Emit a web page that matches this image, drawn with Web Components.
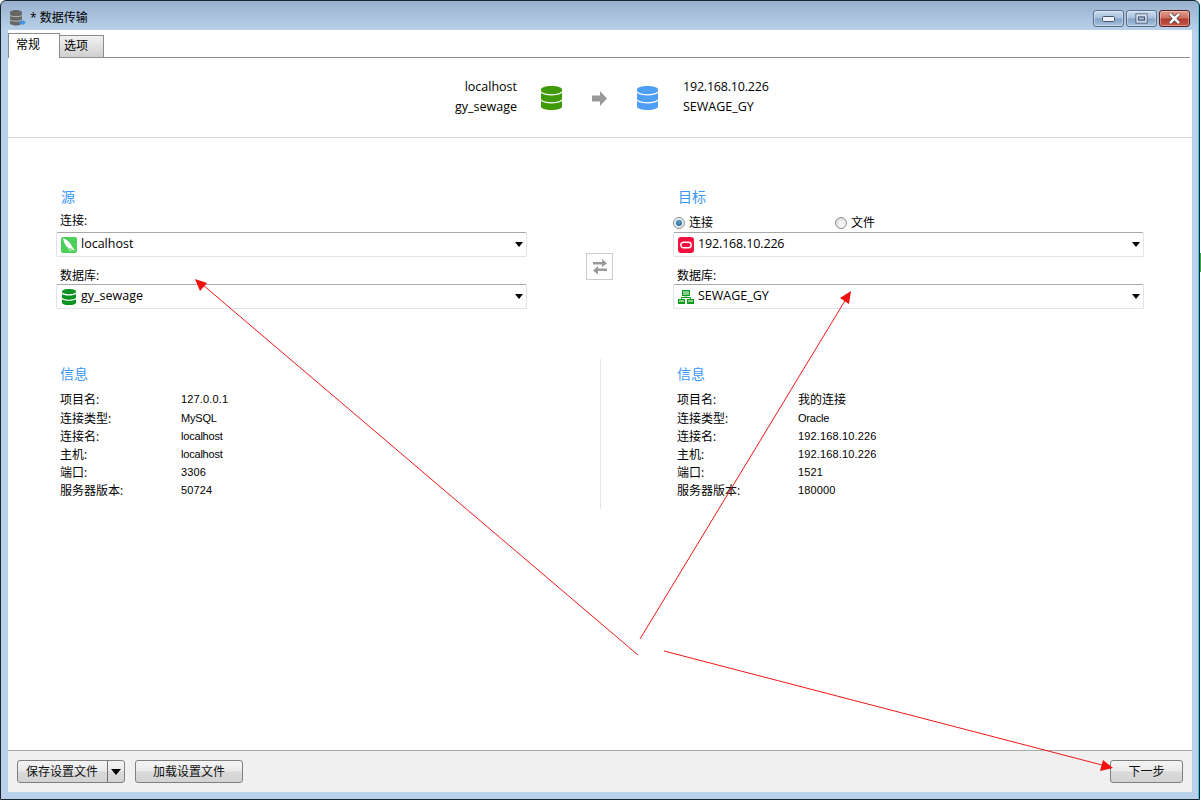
<!DOCTYPE html>
<html lang="zh">
<head>
<meta charset="utf-8">
<title>数据传输</title>
<style>
html, body { margin: 0; overflow: hidden; }
html { background: #fff linear-gradient(transparent 253px, #3fa535 253px, #3fa535 272px, transparent 272px) right top / 1px 100% no-repeat; }
body { font: 12px/18px "Open Sans", "Noto Sans CJK SC", sans-serif; color: #000; }
</style>
</head>
<body>
<transfer-window caption="* 数据传输">
    <tab-strip slot="tabs"></tab-strip>
    <transfer-summary></transfer-summary>
    <transfer-form>
        <conn-panel slot="source" heading="源">
            <field-label first>连接:</field-label>
            <select-box icon="mysql">localhost</select-box>
            <field-label>数据库:</field-label>
            <select-box icon="db">gy_sewage</select-box>
        </conn-panel>
        <swap-button slot="swap"></swap-button>
        <conn-panel slot="target" heading="目标">
            <radio-row></radio-row>
            <select-box icon="oracle" style="letter-spacing: -.15px">192.168.10.226</select-box>
            <field-label>数据库:</field-label>
            <select-box icon="schema">SEWAGE_GY</select-box>
        </conn-panel>
        <info-panel slot="source-info">
            <info-row label="项目名:" value="127.0.0.1" first></info-row>
            <info-row label="连接类型:" value="MySQL"></info-row>
            <info-row label="连接名:" value="localhost"></info-row>
            <info-row label="主机:" value="localhost"></info-row>
            <info-row label="端口:" value="3306"></info-row>
            <info-row label="服务器版本:" value="50724"></info-row>
        </info-panel>
        <info-panel slot="target-info">
            <info-row label="项目名:" value="我的连接" first cjk></info-row>
            <info-row label="连接类型:" value="Oracle"></info-row>
            <info-row label="连接名:" value="192.168.10.226"></info-row>
            <info-row label="主机:" value="192.168.10.226"></info-row>
            <info-row label="端口:" value="1521"></info-row>
            <info-row label="服务器版本:" value="180000"></info-row>
        </info-panel>
    </transfer-form>
    <footer-bar slot="footer"></footer-bar>
</transfer-window>
<red-arrows></red-arrows>

<script>
const dbPath = 'M0 3.5C0 1.4 4.7 0 10.5 0S21 1.4 21 3.5V20.5C21 22.6 16.3 24 10.5 24S0 22.6 0 20.5Z';
const dbLines = 'M0 6C2 8 6 8.8 10.5 8.8S19 8 21 6M0 14C2 16 6 16.8 10.5 16.8S19 16 21 14';

const icons = {
    mysql: `<svg width="16" height="16" viewBox="0 0 16 16"><rect width="16" height="16" rx="2" fill="#4dd05a"/><path d="M1.500 1.500c2.200.2 3.900 1 5.500 2.500 1.800 1.700 3.300 3.700 4.300 5.800.5 1 1.300 2.100 3 3.900-2.200-.5-3.600-1.200-5-2.500-.7.200-1.400 0-2.100-.5C5 9 3.800 7.400 3.300 5.500 3 4.300 2.400 3 1.500 1.500Z" fill="#fff"/><path d="M7 11.500c.8.900 2 1.600 3.400 2.100" stroke="#fff" fill="none"/></svg>`,
    db: `<svg width="16" height="16" viewBox="0 0 21 24"><path d="${dbPath}" fill="#0d9222"/><path d="${dbLines}" stroke="#fff" stroke-width="1.700" fill="none"/></svg>`,
    oracle: `<svg width="16" height="16" viewBox="0 0 16 16"><rect width="16" height="16" rx="3" fill="#f3123f"/><rect x="2.800" y="5.300" width="10.400" height="5.400" rx="2.700" fill="none" stroke="#fff" stroke-width="1.400"/></svg>`,
    schema: `<svg width="16" height="16" viewBox="0 0 16 16"><path d="M4 1h8v6H4ZM0 10h7v5H0ZM9 10h7v5H9Z" fill="#0b9c1a"/><path d="M5 3h6M5 5h6M1 12h5M10 12h5" stroke="#fff"/><path d="M8 7v2M3.500 10V8.500h9V10" stroke="#0b9c1a" fill="none"/></svg>`
};

class IconBase extends HTMLElement {
    render(css, html) {
        this.attachShadow({mode: 'open'}).innerHTML = `<style>${css}</style>${html}`;
    }
}

class TransferWindow extends IconBase {
    connectedCallback() {
        if (this.shadowRoot) return;
        this.render(`
            :host { display: flex; flex-direction: column; box-sizing: border-box; width: 1200px; height: 800px;
                border: 1px solid #17262f; border-radius: 6px 6px 0 0; padding: 0 7px 7px;
                background: linear-gradient(#9ab1ce, #b9d1ea 30px);
                box-shadow: inset -1px 0 0 #3bc3e8; }
            .bar { display: flex; align-items: flex-start; height: 29px; flex: none; }
            .logo { margin: 9px 4px 0 2px; width: 16px; height: 16px; }
            .caption { font-size: 12px; line-height: 18px; margin-top: 8px; color: #000; }
            .controls { margin: 9px 2px 0 auto; display: flex; gap: 2px; }
            .ctl { box-sizing: border-box; width: 31px; height: 17px; border: 1px solid #5b6f8a; border-radius: 3px;
                display: flex; align-items: center; justify-content: center;
                background: linear-gradient(#cbdcef 0, #a9c0dc 48%, #86a3c6 52%, #a9c3de 100%);
                box-shadow: inset 0 0 0 1px rgba(255,255,255,.35); }
            .ctl.close { border-color: #57211c; background: linear-gradient(#e19a8d 0, #cf6f60 48%, #b23a2c 52%, #c5584a 100%); }
            .content { flex: 1; display: flex; flex-direction: column; background: #fff; min-height: 0; }
            main { flex: 1; display: block; min-height: 0; }
        `, `
            <div class="bar">
                <svg class="logo" viewBox="0 0 16 16">
                    <path d="M0 2.500C0 1.100 2.700 0 6 0S12 1.100 12 2.500V13C12 14.400 9.300 15.500 6 15.500S0 14.400 0 13Z" fill="#666"/>
                    <path d="M0 5.500C2 7 10 7 12 5.500M0 10C2 11.500 10 11.500 12 10" stroke="#ccc" stroke-width=".8" fill="none"/>
                    <path d="M9 11.500h3.500V9.500L16 12.500 12.500 15.500V13.500H9Z" fill="#3d97e8"/>
                </svg>
                <span class="caption">${this.getAttribute('caption')}</span>
                <div class="controls">
                    <div class="ctl"><svg width="13" height="6"><rect x=".5" y=".5" width="12" height="5" rx="1" fill="#eef2f7" stroke="#44546a"/></svg></div>
                    <div class="ctl"><svg width="13" height="11"><rect x="1" y="1" width="11" height="9" fill="none" stroke="#44546a" stroke-width="1"/><rect x="2" y="2" width="9" height="7" fill="none" stroke="#eef2f7" stroke-width="1"/><rect x="3.500" y="4" width="6" height="3" fill="#a9c0dc" stroke="#44546a"/></svg></div>
                    <div class="ctl close"><svg width="15" height="11" viewBox="0 0 15 11"><path d="M3 1l9 9M12 1l-9 9" stroke="#3d2a2a" stroke-width="4"/><path d="M3 1l9 9M12 1l-9 9" stroke="#fff" stroke-width="2.600"/></svg></div>
                </div>
            </div>
            <div class="content">
                <slot name="tabs"></slot>
                <main><slot></slot></main>
                <slot name="footer"></slot>
            </div>
        `);
    }
}

class TabStrip extends IconBase {
    connectedCallback() {
        this.render(`
            :host { display: flex; align-items: flex-end; height: 28px; flex: none; }
            .tab { box-sizing: border-box; border: 1px solid #8c8c8c; }
            .on { width: 52px; height: 25px; border-bottom: 0; background: #fff; padding: 2px 0 0 7px; }
            .off { width: 44px; height: 23px; border-left: 0; padding: 1px 0 0 4px; background: linear-gradient(#f2f2f2, #cfcfcf); }
            .rest { flex: 1; height: 1px; background: #8c8c8c; margin-right: 2px; }
        `, `<div class="tab on">常规</div><div class="tab off">选项</div><div class="rest"></div>`);
    }
}

class TransferSummary extends IconBase {
    connectedCallback() {
        const db = c => `<svg width="21" height="24" viewBox="0 0 21 24"><path d="${dbPath}" fill="${c}"/><path d="${dbLines}" stroke="#fff" stroke-width="1.200" fill="none"/></svg>`;
        this.render(`
            :host { display: flex; align-items: flex-start; box-sizing: border-box; height: 80px; padding: 19px 0 0 389px;
                border-bottom: 1px solid #d8d8d8; font-size: 12.5px; line-height: 20px; color: #000; }
            .names { width: 120px; text-align: right; }
            .names.to { width: auto; text-align: left; margin-left: 25px; }
            .ip { letter-spacing: -.2px; }
            svg { flex: none; margin-top: 9px; }
            .first { margin-left: 24px; }
            .arrow { margin: 14px 30px 0; }
        `, `
            <div class="names">localhost<br>gy_sewage</div>
            <span class="first">${db('#3f9a08')}</span>
            <svg class="arrow" width="15" height="15" viewBox="0 0 15 15"><path d="M0 4.500H8V0L15 7.500 8 15V10.500H0Z" fill="#999"/></svg>
            <span>${db('#4f9ef5')}</span>
            <div class="names to"><span class="ip">192.168.10.226</span><br>SEWAGE_GY</div>
        `);
    }
}

class TransferForm extends IconBase {
    connectedCallback() {
        this.render(`
            :host { display: grid; grid-template-columns: 471px 146px 471px; padding: 49px 48px 0; }
            .rule { width: 1px; height: 150px; margin: 50px 0 0 73px; background: #e4e4e4; }
            .info { padding-top: 50px; }
        `, `
            <slot name="source"></slot>
            <slot name="swap"></slot>
            <slot name="target"></slot>
            <div class="info"><slot name="source-info"></slot></div>
            <div class="rule"></div>
            <div class="info"><slot name="target-info"></slot></div>
        `);
    }
}

class ConnPanel extends IconBase {
    connectedCallback() {
        this.render(`
            :host { display: grid; grid-template-rows: 20px 25px 25px 27px 25px; }
            h2 { margin: 0; padding-left: 5px; font: 14px/20px "Open Sans", "Noto Sans CJK SC", sans-serif; color: #3a97f5; }
        `, `<h2>${this.getAttribute('heading')}</h2><slot></slot>`);
    }
}

class FieldLabel extends IconBase {
    connectedCallback() {
        this.render(`
            :host { display: block; align-self: end; padding-left: 4px; line-height: 16px; }
            :host([first]) { padding-bottom: 3px; }
        `, `<slot></slot>`);
    }
}

class RadioRow extends IconBase {
    connectedCallback() {
        this.render(`
            :host { display: flex; align-items: center; align-self: end; height: 18px; font-size: 12px; }
            .item { display: flex; align-items: center; gap: 4px; }
            .item + .item { margin-left: 122px; }
            .dot { box-sizing: border-box; width: 12px; height: 12px; border-radius: 50%; border: 1px solid #8e8f8f;
                background: radial-gradient(circle at 60% 65%, #fff, #d0d0d0); display: flex; align-items: center; justify-content: center; }
            .dot.on { background: #e8eef4; }
            .dot.on::after { content: ""; width: 6px; height: 6px; border-radius: 50%; background: radial-gradient(circle at 50% 40%, #5aa8cf, #134f76); }
        `, `
            <span class="item"><span class="dot on"></span>连接</span>
            <span class="item"><span class="dot"></span>文件</span>
        `);
    }
}

class SelectBox extends IconBase {
    connectedCallback() {
        this.render(`
            :host { display: flex; align-items: center; box-sizing: border-box; height: 25px; padding: 0 2px 0 4px;
                border: 1px solid #e0e3eb; border-top-color: #a9a9a9; border-radius: 2px; background: #fff;
                font-size: 12.5px; color: #000; }
            .icon { width: 16px; height: 16px; margin-right: 4px; flex: none; }
            .icon svg { display: block; }
            .text { padding-bottom: 2px; }
            .drop { margin-left: auto; margin-right: 1px; width: 0; height: 0;
                border: 4.500px solid transparent; border-top: 5px solid #000; border-bottom: 0; }
        `, `<span class="icon">${icons[this.getAttribute('icon')]}</span><span class="text"><slot></slot></span><span class="drop"></span>`);
    }
}

class SwapButton extends IconBase {
    connectedCallback() {
        this.render(`
            :host { display: flex; align-items: center; justify-content: center; box-sizing: border-box;
                align-self: start; width: 27px; height: 27px; margin: 66px 0 0 59px; border: 1px solid #ccc; background: #fff; }
        `, `<svg width="16" height="16" viewBox="0 0 16 16"><path d="M1 3H10V0L15 4.500 10 8V5.500H1ZM15 9.500H6V7L1 11.500 6 15.500V12H15Z" fill="#999"/></svg>`);
    }
}

class InfoPanel extends IconBase {
    connectedCallback() {
        this.render(`
            :host { display: block; padding: 5px 0 0 4px; }
            h2 { margin: 0 0 6px 0; font: 14px/20px "Open Sans", "Noto Sans CJK SC", sans-serif; color: #3a97f5; }
        `, `<h2>信息</h2><slot></slot>`);
    }
}

class InfoRow extends IconBase {
    connectedCallback() {
        const value = this.getAttribute('value');
        // digits run a little wider than Liberation Sans, letters a little narrower
        const spacing = /^[\d.]+$/.test(value) ? '.15px' : '-.2px';
        this.render(`
            :host { display: grid; grid-template-columns: 121px 1fr; height: 18px; line-height: 18px; color: #000; }
            :host([first]) { margin-bottom: 1px; }
            .key { padding-top: 1px; }
            .val { font: 11px/18px "Liberation Sans", "Noto Sans CJK SC", sans-serif; letter-spacing: ${spacing}; }
            :host([cjk]) .val { font-size: 12px; letter-spacing: 0; padding-top: 1px; }
        `, `<span class="key">${this.getAttribute('label')}</span><span class="val">${value}</span>`);
    }
}

class FooterBar extends IconBase {
    connectedCallback() {
        this.render(`
            :host { display: flex; align-items: flex-start; box-sizing: border-box; height: 42px; flex: none;
                padding: 9px 9px 0; border-top: 1px solid #aaa; background: #f0f0f0; }
            .btn { box-sizing: border-box; height: 23px; border: 1px solid #7f7f7f; border-radius: 3px;
                display: flex; align-items: center; justify-content: center; color: #111;
                background: linear-gradient(#f4f4f4 0, #eaeaea 48%, #d9d9d9 52%, #d3d3d3 100%); }
            .save { width: 108px; justify-content: flex-start; padding-left: 8px; }
            .sep { width: 1px; height: 21px; margin-left: 9px; background: #707070; }
            .tri { width: 0; height: 0; margin-left: 3px; border: 5.500px solid transparent; border-top: 6px solid #000; border-bottom: 0; }
            .load { width: 108px; margin-left: 10px; }
            .next { width: 73px; margin-left: auto; }
        `, `
            <div class="btn save">保存设置文件<span class="sep"></span><span class="tri"></span></div>
            <div class="btn load">加载设置文件</div>
            <div class="btn next">下一步</div>
        `);
    }
}

class RedArrows extends IconBase {
    connectedCallback() {
        this.render(`
            :host { position: absolute; left: 0; top: 0; width: 1201px; height: 801px; pointer-events: none; }
            svg { display: block; }
        `, `
            <svg width="1201" height="801" viewBox="0 0 1201 801">
                <g stroke="#f01818" stroke-width="1" fill="none">
                    <path d="M638 655L203 285"/>
                    <path d="M640 639L846 299"/>
                    <path d="M664 651L1102 765"/>
                </g>
                <g fill="#f01010">
                    <path d="M195 279L207 283 200 291Z"/>
                    <path d="M851 291L849 304 840 298Z"/>
                    <path d="M1113 768L1100 771 1103 760Z"/>
                </g>
            </svg>
        `);
    }
}

customElements.define('transfer-window', TransferWindow);
customElements.define('tab-strip', TabStrip);
customElements.define('transfer-summary', TransferSummary);
customElements.define('transfer-form', TransferForm);
customElements.define('conn-panel', ConnPanel);
customElements.define('field-label', FieldLabel);
customElements.define('radio-row', RadioRow);
customElements.define('select-box', SelectBox);
customElements.define('swap-button', SwapButton);
customElements.define('info-panel', InfoPanel);
customElements.define('info-row', InfoRow);
customElements.define('footer-bar', FooterBar);
customElements.define('red-arrows', RedArrows);
</script>
</body>
</html>
